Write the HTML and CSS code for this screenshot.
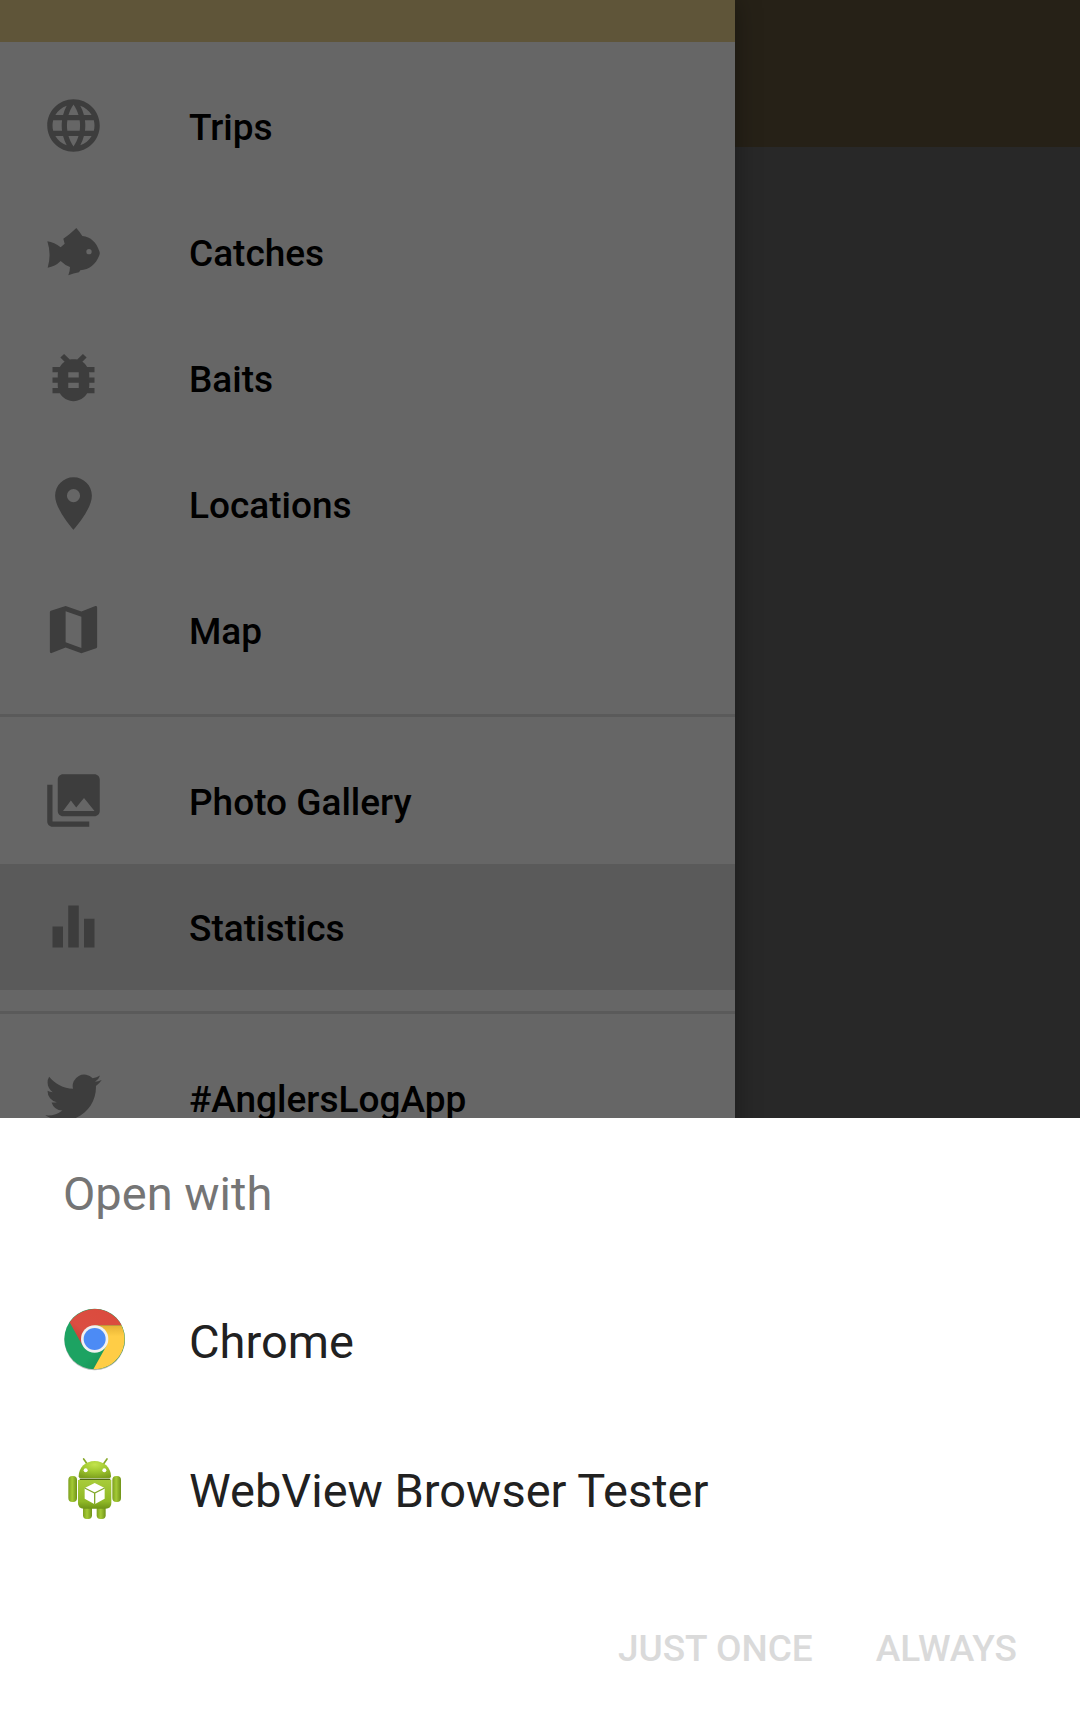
FILE: index.html
```html
<!DOCTYPE html>
<html lang="en">
<head>
<meta charset="utf-8">
<meta name="viewport" content="width=device-width, initial-scale=1">
<title>Open with</title>
<link rel="stylesheet" href="styles.css">
</head>
<body>
<div class="screen">
  <div class="app">
    <nav class="drawer" aria-label="Main">
      <div class="drawer-header"></div>
      <ul class="menu">
        <li><a class="menu-item" href="#trips">
          <svg class="icon" viewBox="0 0 24 24" aria-hidden="true"><path d="M11.99 2C6.47 2 2 6.48 2 12s4.47 10 9.99 10C17.52 22 22 17.52 22 12S17.52 2 11.99 2zm6.93 6h-2.95c-.32-1.25-.78-2.45-1.38-3.56 1.84.63 3.37 1.91 4.33 3.56zM12 4.04c.83 1.2 1.48 2.53 1.91 3.96h-3.82c.43-1.43 1.08-2.76 1.91-3.96zM4.26 14C4.1 13.36 4 12.69 4 12s.1-1.36.26-2h3.38c-.08.66-.14 1.32-.14 2 0 .68.06 1.34.14 2H4.26zm.82 2h2.95c.32 1.25.78 2.45 1.38 3.56-1.84-.63-3.37-1.9-4.33-3.56zm2.95-8H5.08c.96-1.66 2.49-2.93 4.33-3.56C8.81 5.55 8.35 6.75 8.03 8zM12 19.96c-.83-1.2-1.48-2.53-1.91-3.96h3.82c-.43 1.43-1.08 2.76-1.91 3.96zM14.34 14H9.66c-.09-.66-.16-1.32-.16-2 0-.68.07-1.35.16-2h4.68c.09.65.16 1.32.16 2 0 .68-.07 1.34-.16 2zm.25 5.56c.6-1.11 1.06-2.31 1.38-3.56h2.95c-.96 1.65-2.49 2.93-4.33 3.56zM16.36 14c.08-.66.14-1.32.14-2 0-.68-.06-1.34-.14-2h3.38c.16.64.26 1.31.26 2s-.1 1.36-.26 2h-3.38z"/></svg>
          <span>Trips</span></a></li>
        <li><a class="menu-item" href="#catches">
          <svg class="icon" viewBox="0 0 189 189" aria-hidden="true"><path fill-rule="evenodd" d="M103 24 Q111 33 121 48 C146 50 164 68 172 94 Q175 101 171 108 C161 133 142 149 115 151 L111 157 Q94 160 79 166 Q84 153 84 141 Q69 136 56 123 Q39 140 17 143 Q29 103 16 64 Q37 67 56 82 L68 71 L64 56 Q85 42 103 24z M141 87a8 8 0 1 0 0 16a8 8 0 1 0 0-16z"/></svg>
          <span>Catches</span></a></li>
        <li><a class="menu-item" href="#baits">
          <svg class="icon" viewBox="0 0 24 24" aria-hidden="true"><path d="M20 8h-2.81c-.45-.78-1.07-1.45-1.82-1.96L17 4.41 15.59 3l-2.17 2.17C12.96 5.06 12.49 5 12 5c-.49 0-.96.06-1.41.17L8.41 3 7 4.41l1.62 1.63C7.88 6.55 7.26 7.22 6.81 8H4v2h2.09c-.05.33-.09.66-.09 1v1H4v2h2v1c0 .34.04.67.09 1H4v2h2.81c1.04 1.79 2.97 3 5.19 3s4.15-1.21 5.19-3H20v-2h-2.09c.05-.33.09-.66.09-1v-1h2v-2h-2v-1c0-.34-.04-.67-.09-1H20V8zm-6 8h-4v-2h4v2zm0-4h-4v-2h4v2z"/></svg>
          <span>Baits</span></a></li>
        <li><a class="menu-item" href="#locations">
          <svg class="icon" viewBox="0 0 24 24" aria-hidden="true"><path d="M12 2C8.13 2 5 5.13 5 9c0 5.25 7 13 7 13s7-7.75 7-13c0-3.87-3.13-7-7-7zm0 9.5a2.5 2.5 0 0 1 0-5 2.5 2.5 0 0 1 0 5z"/></svg>
          <span>Locations</span></a></li>
        <li><a class="menu-item" href="#map">
          <svg class="icon" viewBox="0 0 24 24" aria-hidden="true"><path d="M20.5 3l-.16.03L15 5.1 9 3 3.36 4.9c-.21.07-.36.25-.36.48V20.5c0 .28.22.5.5.5l.16-.03L9 18.9l6 2.1 5.64-1.9c.21-.07.36-.25.36-.48V3.5c0-.28-.22-.5-.5-.5zM15 19l-6-2.11V5l6 2.11V19z"/></svg>
          <span>Map</span></a></li>
      </ul>
      <ul class="menu">
        <li><a class="menu-item" href="#gallery">
          <svg class="icon" viewBox="0 0 24 24" aria-hidden="true"><path d="M22 16V4c0-1.100-.9-2-2-2H8c-1.100 0-2 .9-2 2v12c0 1.100.9 2 2 2h12c1.100 0 2-.9 2-2zm-11-4l2.030 2.710L16 11l4 5H8l3-4zM2 6v14c0 1.100.9 2 2 2h14v-2H4V6H2z"/></svg>
          <span>Photo Gallery</span></a></li>
        <li><a class="menu-item selected" href="#statistics" aria-current="page">
          <svg class="icon" viewBox="0 0 24 24" aria-hidden="true"><path d="M10 20h4V4h-4v16zm-6 0h4v-8H4v8zM16 9v11h4V9h-4z"/></svg>
          <span>Statistics</span></a></li>
      </ul>
      <ul class="menu">
        <li><a class="menu-item" href="#twitter">
          <svg class="icon" viewBox="-1.400 -1.400 26.800 26.800" aria-hidden="true"><path d="M23.953 4.570a10 10 0 0 1-2.825.775 4.958 4.958 0 0 0 2.163-2.723c-.951.555-2.005.959-3.127 1.184a4.920 4.920 0 0 0-8.384 4.482C7.690 8.095 4.067 6.130 1.640 3.162a4.822 4.822 0 0 0-.666 2.475c0 1.710.87 3.213 2.188 4.096a4.904 4.904 0 0 1-2.228-.616v.06a4.923 4.923 0 0 0 3.946 4.827 4.996 4.996 0 0 1-2.212.085 4.936 4.936 0 0 0 4.604 3.417 9.867 9.867 0 0 1-6.102 2.105c-.39 0-.779-.023-1.170-.067a13.995 13.995 0 0 0 7.557 2.209c9.053 0 13.998-7.496 13.998-13.985 0-.21 0-.42-.015-.63A9.935 9.935 0 0 0 24 4.590z"/></svg>
          <span>#AnglersLogApp</span></a></li>
      </ul>
    </nav>
    <main class="backdrop"><div class="toolbar"></div></main>
  </div>

  <section class="sheet" role="dialog" aria-labelledby="sheet-title">
    <h1 class="sheet-title" id="sheet-title">Open with</h1>
    <button class="choice" type="button">
      <svg class="app-icon" viewBox="0 0 189 189" aria-hidden="true">
        <defs>
          <linearGradient id="red-shade" x1="0" y1="1" x2="1" y2="0"><stop offset="0" stop-color="#b93a2c"/><stop offset=".35" stop-color="#db4e42"/><stop offset="1" stop-color="#db4a3c"/></linearGradient>
          <linearGradient id="green-shade" x1="0" y1="0" x2="1" y2="1"><stop offset=".6" stop-color="#1da362"/><stop offset="1" stop-color="#0f7d48"/></linearGradient>
          <linearGradient id="yellow-shade" x1="0" y1="0" x2="0" y2="1"><stop offset="0" stop-color="#e5b134"/><stop offset=".25" stop-color="#ffcd46"/></linearGradient>
        </defs>
        <circle cx="95" cy="96" r="91" fill="#bdbdbd"/>
        <circle cx="95" cy="93" r="91" fill="url(#green-shade)"/>
        <path d="M95 52H175A91 91 0 0 1 91 184L130 114z" fill="url(#yellow-shade)"/>
        <path d="M20 43A91 91 0 0 1 176 52H95L59 113z" fill="url(#red-shade)"/>
        <circle cx="95" cy="93" r="41" fill="#f1f1f1"/>
        <circle cx="95" cy="93" r="33" fill="#4c8bf5"/>
      </svg>
      <span>Chrome</span>
    </button>
    <button class="choice" type="button">
      <svg class="app-icon" viewBox="0 0 189 189" aria-hidden="true">
        <defs>
          <linearGradient id="droid" x1="0" y1="0" x2="0" y2="1"><stop offset="0" stop-color="#a8cc3a"/><stop offset=".75" stop-color="#8fb826"/><stop offset="1" stop-color="#6f9417"/></linearGradient>
          <linearGradient id="droid-side" x1="0" y1="0" x2="1" y2="0"><stop offset="0" stop-color="#7d9f1e"/><stop offset=".45" stop-color="#a4ca35"/><stop offset="1" stop-color="#6f9218"/></linearGradient>
          <radialGradient id="droid-head" cx=".5" cy=".2" r=".8"><stop offset="0" stop-color="#c3e34e"/><stop offset=".5" stop-color="#a0c830"/><stop offset="1" stop-color="#7da01d"/></radialGradient>
        </defs>
        <path d="M62 6L72 20M132 6L122 20" stroke="#86a829" stroke-width="5" stroke-linecap="round"/>
        <rect x="60" y="145" width="27" height="41" rx="11" fill="url(#droid-side)"/>
        <rect x="101" y="145" width="27" height="41" rx="11" fill="url(#droid-side)"/>
        <rect x="16" y="57" width="26" height="78" rx="12" fill="url(#droid-side)"/>
        <rect x="148" y="57" width="26" height="78" rx="12" fill="url(#droid-side)"/>
        <path d="M45 69H145V138Q145 155 128 155H62Q45 155 45 138z" fill="url(#droid)"/>
        <path d="M47 58C47 31 68 12 95 12S144 31 144 58Q144 64 138 64H53Q47 64 47 58z" fill="url(#droid-head)"/>
        <path d="M50 67H142" stroke="#4f6a12" stroke-width="4"/>
        <circle cx="68" cy="40" r="6" fill="#fff"/><circle cx="124" cy="40" r="6" fill="#fff"/>
        <path d="M95 78L125 93V125L95 142L65 125V93z" fill="#fff"/>
        <path d="M65 93L95 108L125 93M95 108V142" fill="none" stroke="#82a82a" stroke-width="4"/>
      </svg>
      <span>WebView Browser Tester</span>
    </button>
    <div class="actions">
      <button class="action" type="button" disabled>JUST ONCE</button>
      <button class="action" type="button" disabled>ALWAYS</button>
    </div>
  </section>
</div>
</body>
</html>
```
FILE: styles.css
```css
* {
  box-sizing: border-box;
}

body {
  margin: 0;
  font-family: Roboto, "Liberation Sans", sans-serif;
  background: #282828;
}

.screen {
  display: flex;
  flex-direction: column;
  height: 100vh;
}

/* Dimmed app behind the sheet */
.app {
  display: flex;
  flex: 1;
  min-height: 0;
  overflow: hidden;
}

.drawer {
  flex: none;
  width: 70%;
  max-width: 735px;
  align-self: flex-start;
  background: #666;
  box-shadow: 0 0 24px rgba(0, 0, 0, 0.35);
  z-index: 1;
}

.drawer-header {
  height: 42px;
  background: #5f5539;
}

.backdrop {
  flex: 1;
}

.toolbar {
  height: 147px;
  background: #262117;
}

.menu {
  list-style: none;
  margin: 0;
  padding: 21px 0;
}

.menu + .menu {
  border-top: 3px solid #5a5a5a;
}

.menu-item {
  display: flex;
  align-items: center;
  gap: 84px;
  height: 126px;
  padding: 0 42px;
  color: #000;
  font-size: 37px;
  font-weight: 500;
  line-height: 44px;
  text-decoration: none;
}

.menu-item span {
  padding-top: 4px;
}

.selected {
  background: #5a5a5a;
}

.icon {
  flex: none;
  width: 63px;
  height: 63px;
  margin-bottom: 2px;
  fill: #3d3d3d;
}

/* App chooser */
.sheet {
  flex: none;
  background: #fff;
}

.sheet-title {
  margin: 0;
  padding: 42px 63px 37px;
  color: #757575;
  font-size: 47px;
  font-weight: 400;
  line-height: 68px;
}

.choice {
  display: flex;
  align-items: center;
  gap: 63px;
  width: 100%;
  height: 149px;
  padding: 0 63px;
  border: 0;
  background: none;
  color: #212121;
  font: inherit;
  font-size: 47px;
  line-height: 56px;
  text-align: left;
}

.choice span {
  padding-top: 4px;
}

.app-icon {
  flex: none;
  width: 63px;
  height: 63px;
}

.actions {
  display: flex;
  justify-content: flex-end;
  align-items: center;
  gap: 63px;
  height: 168px;
  padding: 4px 63px 0;
}

.action {
  padding: 0;
  border: 0;
  background: none;
  color: #dadada;
  font: inherit;
  font-size: 37px;
  font-weight: 500;
  line-height: 44px;
}
```
